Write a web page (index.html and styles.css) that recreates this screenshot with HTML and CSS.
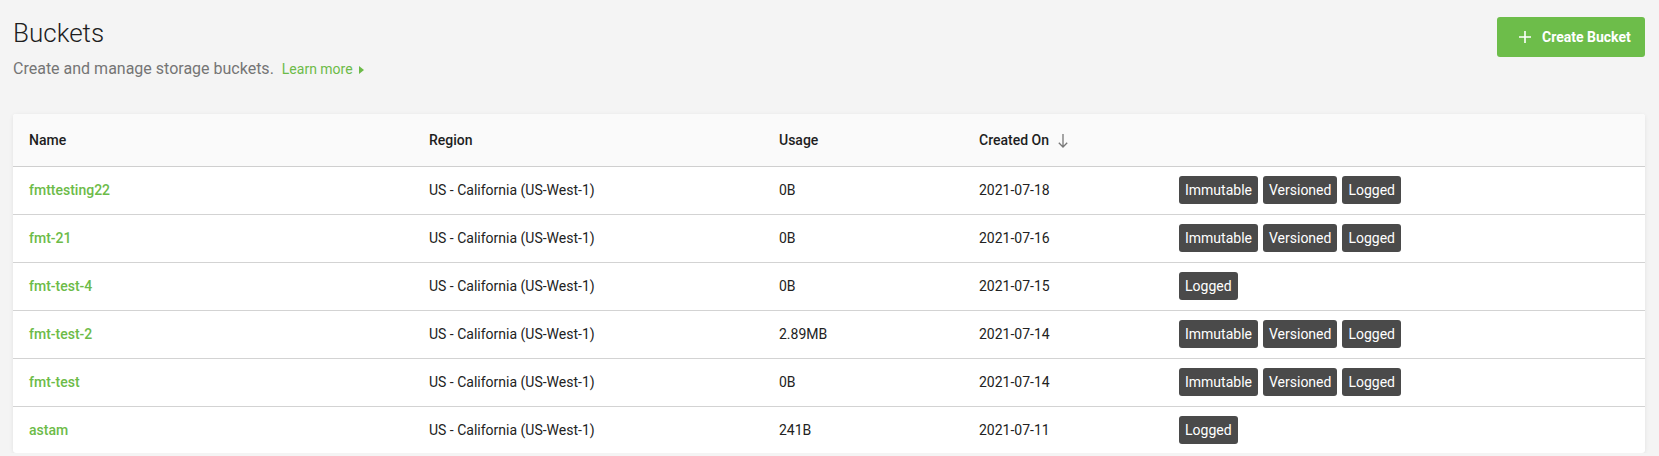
FILE: index.html
```html
<!DOCTYPE html>
<html lang="en">
<head>
<meta charset="utf-8">
<title>Buckets</title>
<link rel="stylesheet" href="styles.css">
</head>
<body>
<div class="page">
  <div class="page-header">
    <div class="heading">
      <h1 class="title">Buckets</h1>
      <p class="subtitle">Create and manage storage buckets. <a class="learn" href="#">Learn more<svg class="caret" width="5" height="8" viewBox="0 0 5 8"><path d="M0 0 L5 4 L0 8 Z" fill="#6cbb48"/></svg></a></p>
    </div>
    <button class="btn-create"><svg class="plus" width="12" height="12" viewBox="0 0 12 12"><path d="M6 0 V12 M0 6 H12" stroke="#fff" stroke-width="1.6"/></svg>Create Bucket</button>
  </div>

  <div class="card">
    <table class="buckets">
      <colgroup>
        <col class="c-name"><col class="c-region"><col class="c-usage"><col class="c-created"><col class="c-tags">
      </colgroup>
      <thead>
        <tr>
          <th>Name</th>
          <th>Region</th>
          <th>Usage</th>
          <th><span class="sort">Created On<svg class="arrow" width="10" height="14" viewBox="0 0 10 14"><path d="M5 0 V13 M0.8 8.8 L5 13 L9.2 8.8" stroke="#777" stroke-width="1.3" fill="none"/></svg></span></th>
          <th></th>
        </tr>
      </thead>
      <tbody>
        <tr>
          <td><a class="bname" href="#">fmttesting22</a></td>
          <td>US - California (US-West-1)</td>
          <td>0B</td>
          <td>2021-07-18</td>
          <td><span class="tag">Immutable</span><span class="tag">Versioned</span><span class="tag">Logged</span></td>
        </tr>
        <tr>
          <td><a class="bname" href="#">fmt-21</a></td>
          <td>US - California (US-West-1)</td>
          <td>0B</td>
          <td>2021-07-16</td>
          <td><span class="tag">Immutable</span><span class="tag">Versioned</span><span class="tag">Logged</span></td>
        </tr>
        <tr>
          <td><a class="bname" href="#">fmt-test-4</a></td>
          <td>US - California (US-West-1)</td>
          <td>0B</td>
          <td>2021-07-15</td>
          <td><span class="tag">Logged</span></td>
        </tr>
        <tr>
          <td><a class="bname" href="#">fmt-test-2</a></td>
          <td>US - California (US-West-1)</td>
          <td>2.89MB</td>
          <td>2021-07-14</td>
          <td><span class="tag">Immutable</span><span class="tag">Versioned</span><span class="tag">Logged</span></td>
        </tr>
        <tr>
          <td><a class="bname" href="#">fmt-test</a></td>
          <td>US - California (US-West-1)</td>
          <td>0B</td>
          <td>2021-07-14</td>
          <td><span class="tag">Immutable</span><span class="tag">Versioned</span><span class="tag">Logged</span></td>
        </tr>
        <tr class="last">
          <td><a class="bname" href="#">astam</a></td>
          <td>US - California (US-West-1)</td>
          <td>241B</td>
          <td>2021-07-11</td>
          <td><span class="tag">Logged</span></td>
        </tr>
      </tbody>
    </table>
  </div>
</div>
</body>
</html>
```

FILE: styles.css
```css
* { box-sizing: border-box; }

html, body {
  margin: 0;
  padding: 0;
  background: #f4f4f4;
  font-family: Roboto, "Liberation Sans", Arial, sans-serif;
  color: #222;
}

.page {
  padding: 0 14px 0 13px;
}

.page-header {
  display: flex;
  justify-content: space-between;
  align-items: flex-start;
}

.title {
  margin: 17px 0 0;
  font-size: 26px;
  line-height: 32px;
  font-weight: 300;
  color: #1e1e1e;
}

.subtitle {
  margin: 10px 0 0;
  font-size: 16px;
  line-height: 20px;
  color: #757575;
}

.learn {
  margin-left: 4px;
  font-size: 14px;
  color: #6cbb48;
  text-decoration: none;
}

.caret {
  margin-left: 6px;
  vertical-align: 0px;
}

.btn-create {
  margin-top: 17px;
  height: 40px;
  width: 148px;
  display: flex;
  align-items: center;
  padding: 0 0 0 22px;
  border: none;
  border-radius: 3px;
  background: #6dbd4a;
  color: #fff;
  font-family: Roboto, "Liberation Sans", Arial, sans-serif;
  font-size: 14px;
  font-weight: 700;
}

.plus {
  margin-right: 11px;
}

.card {
  margin-top: 35px;
  background: #fff;
  border-radius: 3px;
  box-shadow: 0 1px 4px rgba(0, 0, 0, 0.08);
  overflow: hidden;
}

.buckets {
  width: 100%;
  border-collapse: collapse;
  table-layout: fixed;
  font-size: 14px;
}

.c-name { width: 400px; }
.c-region { width: 350px; }
.c-usage { width: 200px; }
.c-created { width: 200px; }

.buckets th {
  height: 52px;
  padding: 0 16px;
  text-align: left;
  font-weight: 500;
  color: #1e1e1e;
  background: #fafafa;
  border-bottom: 1px solid #cfcfcf;
}

.sort {
  display: inline-flex;
  align-items: center;
}

.arrow {
  margin-left: 9px;
  margin-top: 3px;
}

.buckets td {
  height: 48px;
  padding: 0 16px;
  color: #222;
  border-bottom: 1px solid #d3d3d3;
  white-space: nowrap;
}

.buckets tr.last td {
  height: 47px;
  border-bottom: none;
}

.bname {
  color: #6cbb48;
  font-weight: 500;
  text-decoration: none;
}

.tag {
  display: inline-block;
  height: 28px;
  line-height: 28px;
  padding: 0 6px;
  margin-right: 5px;
  border-radius: 3px;
  background: #4a4a4a;
  color: #fff;
  font-size: 14px;
  vertical-align: middle;
}
```
